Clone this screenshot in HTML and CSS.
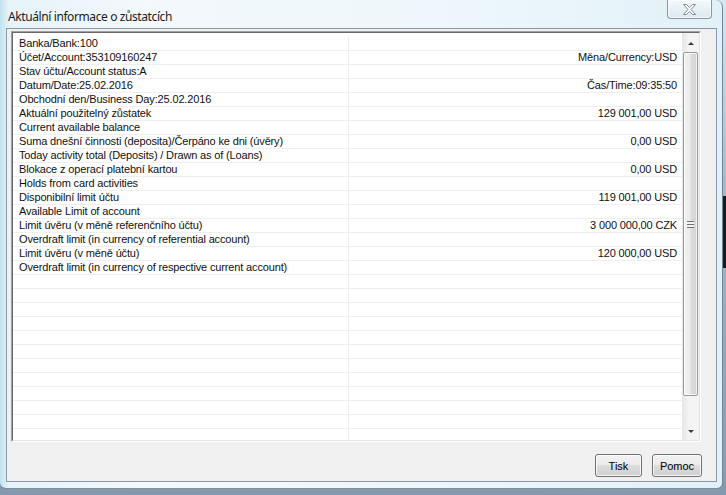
FILE: index.html
```html
<!DOCTYPE html>
<html lang="cs">

<head>
    <meta charset="UTF-8">
    <title>Aktuální informace o zůstatcích</title>
    <link rel="stylesheet" href="styles.css">
</head>

<body>
    <div class="backdrop-strip"></div>

    <div class="window">
        <div class="titlebar">
            <span class="title">Aktuální informace o zůstatcích</span>
            <button class="close" title="Zavřít">
                <svg width="13" height="11" viewBox="0 0 13 11">
                    <polygon points="0.5,0.5 3.5,0.5 6.5,3.5 9.5,0.5 12.5,0.5 8,5.5 12.5,10.5 9.5,10.5 6.5,7.5 3.5,10.5 0.5,10.5 5,5.5"
                        fill="#ffffff" stroke="#7f8b96" stroke-width="1" stroke-linejoin="round" />
                </svg>
            </button>
        </div>

        <div class="client">
            <div class="list">
                <div class="list-inner">
                    <div class="rows">
                        <div class="row"><span class="c1">Banka/Bank:100</span><span class="c2"></span></div>
                        <div class="row"><span class="c1">Účet/Account:353109160247</span><span class="c2">Měna/Currency:USD</span></div>
                        <div class="row"><span class="c1">Stav účtu/Account status:A</span><span class="c2"></span></div>
                        <div class="row"><span class="c1">Datum/Date:25.02.2016</span><span class="c2">Čas/Time:09:35:50</span></div>
                        <div class="row"><span class="c1">Obchodní den/Business Day:25.02.2016</span><span class="c2"></span></div>
                        <div class="row"><span class="c1">Aktuální použitelný zůstatek</span><span class="c2">129 001,00 USD</span></div>
                        <div class="row"><span class="c1">Current available balance</span><span class="c2"></span></div>
                        <div class="row"><span class="c1">Suma dnešní činnosti (deposita)/Čerpáno ke dni (úvěry)</span><span class="c2">0,00 USD</span></div>
                        <div class="row"><span class="c1">Today activity total (Deposits) / Drawn as of (Loans)</span><span class="c2"></span></div>
                        <div class="row"><span class="c1">Blokace z operací platební kartou</span><span class="c2">0,00 USD</span></div>
                        <div class="row"><span class="c1">Holds from card activities</span><span class="c2"></span></div>
                        <div class="row"><span class="c1">Disponibilní limit účtu</span><span class="c2">119 001,00 USD</span></div>
                        <div class="row"><span class="c1">Available Limit of account</span><span class="c2"></span></div>
                        <div class="row"><span class="c1">Limit úvěru (v měně referenčního účtu)</span><span class="c2">3 000 000,00 CZK</span></div>
                        <div class="row"><span class="c1">Overdraft limit (in currency of referential account)</span><span class="c2"></span></div>
                        <div class="row"><span class="c1">Limit úvěru (v měně účtu)</span><span class="c2">120 000,00 USD</span></div>
                        <div class="row"><span class="c1">Overdraft limit (in currency of respective current account)</span><span class="c2"></span></div>
                        <div class="row"><span class="c1"></span><span class="c2"></span></div>
                        <div class="row"><span class="c1"></span><span class="c2"></span></div>
                        <div class="row"><span class="c1"></span><span class="c2"></span></div>
                        <div class="row"><span class="c1"></span><span class="c2"></span></div>
                        <div class="row"><span class="c1"></span><span class="c2"></span></div>
                        <div class="row"><span class="c1"></span><span class="c2"></span></div>
                        <div class="row"><span class="c1"></span><span class="c2"></span></div>
                        <div class="row"><span class="c1"></span><span class="c2"></span></div>
                        <div class="row"><span class="c1"></span><span class="c2"></span></div>
                        <div class="row"><span class="c1"></span><span class="c2"></span></div>
                        <div class="row"><span class="c1"></span><span class="c2"></span></div>
                        <div class="row"><span class="c1"></span><span class="c2"></span></div>
                    </div>

                    <div class="scrollbar">
                        <div class="sb-btn"><span class="arrow-up"></span></div>
                        <div class="sb-track">
                            <div class="sb-thumb"><span class="grip"></span></div>
                        </div>
                        <div class="sb-btn"><span class="arrow-down"></span></div>
                    </div>
                </div>
            </div>

            <div class="actions">
                <button class="button">Tisk</button>
                <button class="button">Pomoc</button>
            </div>
        </div>
    </div>
</body>

</html>
```

FILE: styles.css
```css
body {
    margin: 0;
    width: 726px;
    height: 495px;
    overflow: hidden;
    position: relative;
    background: linear-gradient(180deg, #dbe6ee 0, #a9bccc 35%, #8499ad 100%);
    font-family: "Liberation Sans", Arial, sans-serif;
}

/* bit of another window peeking out on the right */
.backdrop-strip {
    position: absolute;
    left: 719px;
    top: 196px;
    width: 7px;
    height: 72px;
    background: #1a1a1a;
}

.window {
    position: relative;
    width: 723px;
    height: 489px;
    box-sizing: border-box;
    padding: 0 5px 6px 6px;
    display: flex;
    flex-direction: column;
    border: 1px solid rgba(40, 60, 80, 0.55);
    border-top: none;
    border-left: none;
    border-radius: 0 7px 6px 6px;
    background: linear-gradient(90deg, #c2e2f0 0, #e6f3f9 1.2%, #f3f9fc 20%, #eef7fb 60%, #e2f1f8 100%);
}

.titlebar {
    height: 28px;
    display: flex;
    align-items: flex-start;
}

.title {
    margin: 8px 0 0 2px;
    font-family: "Noto Sans", "Open Sans", sans-serif;
    font-size: 12px;
    letter-spacing: -0.4px;
    color: #1b1b1b;
}

.close {
    margin-left: auto;
    margin-right: 5px;
    width: 45px;
    height: 19px;
    padding: 0;
    display: flex;
    align-items: center;
    justify-content: center;
    border: 1px solid #8797a4;
    border-top: none;
    border-radius: 0 0 4px 4px;
    background: linear-gradient(180deg, #f4f9fb 0, #e7f1f6 50%, #dbe9f0 100%);
    box-shadow: inset 0 0 0 1px rgba(255, 255, 255, 0.7);
}

.client {
    flex: 1;
    display: flex;
    flex-direction: column;
    background: #f0f0f0;
    border: 1px solid #8c99a4;
}

.list {
    margin: 2px 15px 0 4px;
    height: 411px;
    box-sizing: border-box;
    border: 1px solid;
    border-color: #a0a0a0 #ffffff #ffffff #a0a0a0;
}

.list-inner {
    height: 100%;
    box-sizing: border-box;
    border: 1px solid;
    border-color: #696969 #e3e3e3 #e3e3e3 #696969;
    background: #fff;
    display: flex;
}

.rows {
    flex: 1;
    padding-top: 4px;
    overflow: hidden;
}

.row {
    display: flex;
    height: 14px;
    box-sizing: border-box;
    border-bottom: 1px solid #efefef;
    font-size: 11px;
    letter-spacing: -0.15px;
    line-height: 13px;
    color: #111;
}

.c1 {
    width: 336px;
    padding-left: 6px;
    box-sizing: border-box;
    border-right: 1px solid #ececec;
    white-space: nowrap;
}

.c2 {
    flex: 1;
    padding-right: 5px;
    text-align: right;
    white-space: nowrap;
}

.scrollbar {
    width: 17px;
    display: flex;
    flex-direction: column;
    background: linear-gradient(90deg, #e6e6e6 0, #f4f4f4 40%, #f4f4f4 100%);
}

.sb-btn {
    height: 17px;
    display: flex;
    align-items: center;
    justify-content: center;
}

.arrow-up,
.arrow-down {
    width: 0;
    height: 0;
    border-left: 3px solid transparent;
    border-right: 3px solid transparent;
}

.arrow-up {
    margin-top: 4px;
    border-bottom: 3px solid #3c3c3c;
}

.arrow-down {
    border-top: 3px solid #3c3c3c;
}

.sb-track {
    flex: 1;
    padding: 2px 1px 0 1px;
}

.sb-thumb {
    height: 344px;
    box-sizing: border-box;
    border: 1px solid #9a9a9a;
    border-radius: 2px;
    background: linear-gradient(90deg, #f2f2f2 0, #ececec 45%, #dcdcdc 55%, #d4d4d4 100%);
    box-shadow: inset 0 0 0 1px rgba(255, 255, 255, 0.75);
    display: flex;
    align-items: center;
    justify-content: center;
}

.grip {
    width: 7px;
    height: 7px;
    background: repeating-linear-gradient(180deg, #6f6f6f 0, #6f6f6f 1px, #f4f4f4 1px, #f4f4f4 3px);
}

.actions {
    display: flex;
    justify-content: flex-end;
    gap: 10px;
    margin: 12px 14px 0 0;
}

.button {
    height: 23px;
    padding: 0;
    min-width: 47px;
    font-family: "Liberation Sans", Arial, sans-serif;
    font-size: 11px;
    color: #000;
    border: 1px solid #707070;
    border-radius: 3px;
    background: linear-gradient(180deg, #f2f2f2 0, #ebebeb 45%, #dddddd 50%, #cfcfcf 100%);
    box-shadow: inset 0 0 0 1px rgba(255, 255, 255, 0.8);
}

.button + .button {
    min-width: 50px;
}
```
